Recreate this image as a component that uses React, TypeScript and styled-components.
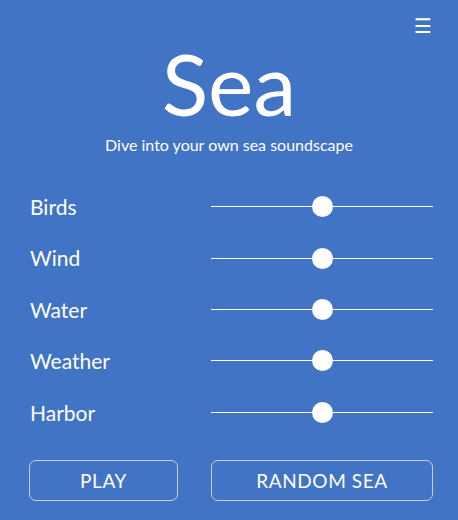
import React, { useState } from 'react';
import styled, { createGlobalStyle } from 'styled-components';

const GlobalStyle = createGlobalStyle`
  html, body {
    margin: 0;
    padding: 0;
    background: #4274c5;
  }
  body {
    font-family: Lato, 'Noto Sans', sans-serif;
    color: #ffffff;
  }
`;

const Page = styled.div`
  width: 458px;
  height: 520px;
  box-sizing: border-box;
  padding: 0 25px 0 29px;
  background: #4274c5;
  display: flex;
  flex-direction: column;
`;

const TopBar = styled.div`
  display: flex;
  justify-content: flex-end;
  height: 44px;
  padding-top: 8px;
  box-sizing: border-box;
`;

const MenuButton = styled.button`
  background: none;
  border: none;
  color: #ffffff;
  font-size: 20px;
  line-height: 28px;
  padding: 0;
  margin-right: 1px;
  cursor: pointer;
  font-family: 'DejaVu Sans', sans-serif;
`;

const Title = styled.h1`
  margin: -6px 0 0 -4px;
  text-align: center;
  font-family: Lato, 'Noto Sans', sans-serif;
  font-weight: 400;
  font-size: 86px;
  line-height: 90px;
`;

const Subtitle = styled.p`
  margin: 7px 0 0 -4px;
  text-align: center;
  font-size: 16px;
  line-height: 20px;
`;

const Mixer = styled.div`
  margin-top: 26px;
  display: grid;
  grid-template-columns: 149px 1fr;
  column-gap: 33px;
`;

const Label = styled.label`
  font-size: 21px;
  line-height: 51.4px;
  height: 51.4px;
  margin-left: 1px;
`;

const Range = styled.input`
  -webkit-appearance: none;
  appearance: none;
  width: 100%;
  margin: 0;
  height: 51.4px;
  background: transparent;
  cursor: pointer;

  &::-webkit-slider-runnable-track {
    height: 1px;
    background: #ffffff;
  }
  &::-webkit-slider-thumb {
    -webkit-appearance: none;
    width: 21px;
    height: 21px;
    border-radius: 50%;
    background: #ffffff;
    margin-top: -10px;
    border: none;
  }
  &:focus {
    outline: none;
  }
`;

const Actions = styled.div`
  margin-top: 22px;
  display: grid;
  grid-template-columns: 149px 1fr;
  column-gap: 33px;
`;

const ActionButton = styled.button`
  height: 41px;
  background: transparent;
  border: 1px solid #c9cfdc;
  border-radius: 7px;
  color: #ffffff;
  font-family: Lato, 'Noto Sans', sans-serif;
  font-size: 19px;
  letter-spacing: 0.6px;
  cursor: pointer;
`;

const channels = ['Birds', 'Wind', 'Water', 'Weather', 'Harbor'];

export default function App() {
  const [levels, setLevels] = useState<number[]>(channels.map(() => 50));

  const setLevel = (i: number, v: number) => {
    setLevels((prev) => prev.map((l, j) => (j === i ? v : l)));
  };

  const randomize = () => {
    setLevels(channels.map(() => Math.round(Math.random() * 100)));
  };

  return (
    <>
      <GlobalStyle />
      <Page>
        <TopBar>
          <MenuButton aria-label="menu">☰</MenuButton>
        </TopBar>
        <Title>Sea</Title>
        <Subtitle>Dive into your own sea soundscape</Subtitle>
        <Mixer>
          {channels.map((name, i) => (
            <React.Fragment key={name}>
              <Label htmlFor={name}>{name}</Label>
              <Range
                id={name}
                type="range"
                min={0}
                max={100}
                value={levels[i]}
                onChange={(e) => setLevel(i, Number(e.target.value))}
              />
            </React.Fragment>
          ))}
        </Mixer>
        <Actions>
          <ActionButton>PLAY</ActionButton>
          <ActionButton onClick={randomize}>RANDOM SEA</ActionButton>
        </Actions>
      </Page>
    </>
  );
}
